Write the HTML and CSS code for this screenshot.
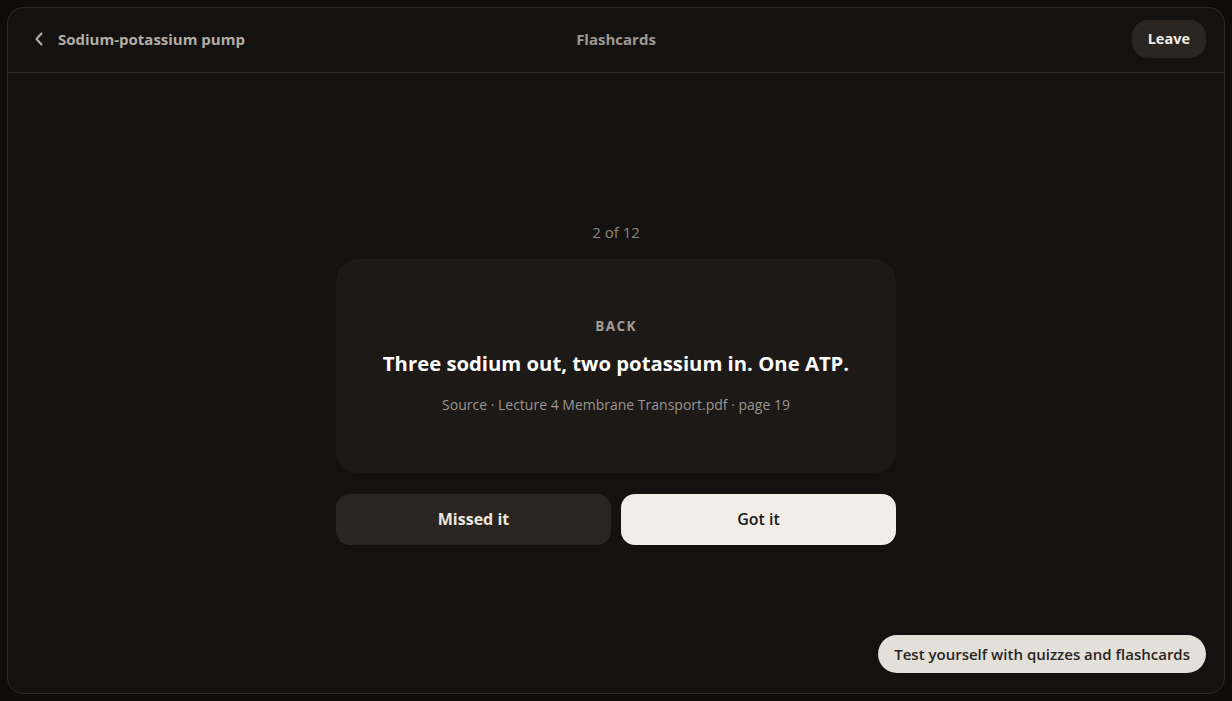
FILE: index.html
```html
<!DOCTYPE html>
<html lang="en">
<head>
    <meta charset="UTF-8">
    <meta name="viewport" content="width=device-width, initial-scale=1.0">
    <title>Flashcards - Sodium-potassium pump</title>
    <link rel="stylesheet" href="styles.css">
</head>
<body>

    <div class="frame">
        <header class="topbar">
            <a class="back-link" href="#">
                <svg width="10" height="14" viewBox="0 0 10 14" fill="none">
                    <path d="M7.5 1.5L2.5 7l5 5.5" stroke="currentColor" stroke-width="2" stroke-linecap="round" stroke-linejoin="round"/>
                </svg>
                <span>Sodium-potassium pump</span>
            </a>
            <div class="mode-title">Flashcards</div>
            <button class="leave-btn">Leave</button>
        </header>

        <main class="study">
            <div class="counter">2 of 12</div>

            <div class="card">
                <div class="card-side">BACK</div>
                <h2 class="card-answer">Three sodium out, two potassium in. One ATP.</h2>
                <div class="card-source">Source · Lecture 4 Membrane Transport.pdf · page 19</div>
            </div>

            <div class="answer-row">
                <button class="answer-btn missed">Missed it</button>
                <button class="answer-btn got">Got it</button>
            </div>
        </main>

        <button class="quiz-pill">Test yourself with quizzes and flashcards</button>
    </div>

</body>
</html>
```

FILE: styles.css
```css
html, body {
    margin: 0;
    padding: 0;
    height: 100%;
    background-color: #0e0d0c;
    font-family: 'Open Sans', 'Lato', sans-serif;
}

body {
    padding: 7px;
    box-sizing: border-box;
}

button {
    font-family: inherit;
    border: none;
    cursor: pointer;
}

.frame {
    position: relative;
    height: 100%;
    box-sizing: border-box;
    border: 1px solid #2c2a28;
    border-radius: 16px;
    background-color: #131211;
    display: flex;
    flex-direction: column;
}

.topbar {
    height: 65px;
    border-bottom: 1px solid #2c2a28;
    display: flex;
    align-items: center;
    justify-content: space-between;
    padding: 0 18px 3px 26px;
    box-sizing: border-box;
    position: relative;
}

.back-link {
    display: flex;
    align-items: center;
    gap: 14px;
    color: #b3ada6;
    text-decoration: none;
    font-size: 15px;
    font-weight: 700;
}

.back-link svg {
    margin-top: 1px;
}

.mode-title {
    position: absolute;
    left: 50%;
    transform: translateX(-50%);
    color: #9f9993;
    font-size: 15px;
    font-weight: 700;
}

.leave-btn {
    height: 38px;
    padding: 0 16px;
    border-radius: 16px;
    background-color: #2a2521;
    color: #f1ece6;
    font-size: 14.5px;
    font-weight: 700;
}

.study {
    flex: 1;
    display: flex;
    flex-direction: column;
    align-items: center;
    justify-content: center;
}

.counter {
    color: #8d8781;
    font-size: 15px;
    line-height: 20px;
    margin-bottom: 17px;
}

.card {
    width: 560px;
    box-sizing: border-box;
    padding: 58px 30px;
    border-radius: 22px;
    background-color: #1c1917;
    text-align: center;
}

.card-side {
    color: #a39d97;
    font-size: 13.5px;
    font-weight: 700;
    letter-spacing: 1.4px;
    line-height: 18px;
}

.card-answer {
    margin: 14px 0 18px;
    color: #ffffff;
    font-size: 20.3px;
    font-weight: 700;
    line-height: 28px;
}

.card-source {
    color: #9b958f;
    font-size: 14px;
    line-height: 20px;
}

.answer-row {
    width: 560px;
    display: flex;
    gap: 10px;
    margin-top: 21px;
}

.answer-btn {
    flex: 1;
    height: 51px;
    border-radius: 14px;
    font-size: 16px;
    font-weight: 700;
}

.answer-btn.missed {
    background-color: #2a2521;
    color: #ece6df;
}

.answer-btn.got {
    background-color: #f2ede7;
    color: #1c1917;
    font-weight: 600;
}

.quiz-pill {
    position: absolute;
    right: 18px;
    bottom: 20px;
    height: 38px;
    padding: 0 16px;
    border-radius: 19px;
    background-color: #e3dfd9;
    color: #2a2521;
    font-size: 15px;
    font-weight: 600;
}
```
